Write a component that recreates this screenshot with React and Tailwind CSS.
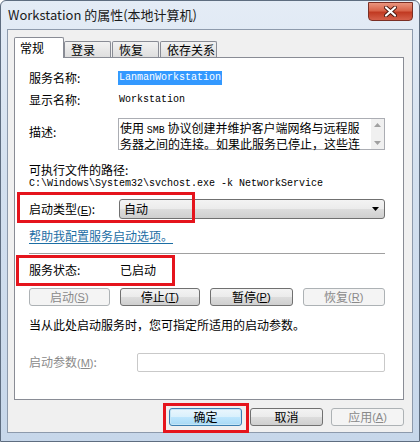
import React from "react";

const cjk = "font-['Noto_Sans_CJK_SC','Liberation_Sans',sans-serif]";
const mono = "font-['Liberation_Mono','Noto_Sans_CJK_SC',monospace]";

function Key({ k }) {
  return (
    <span className="font-['Liberation_Sans',sans-serif] text-[11px]">
      (<span className="underline">{k}</span>)
    </span>
  );
}

function Btn({ children, disabled, primary, className = "" }) {
  let look =
    "border-[#707070] bg-[linear-gradient(#f3f3f3_0%,#ebebeb_50%,#dddddd_50%,#cfcfcf_100%)] text-black";
  if (disabled) look = "border-[#adb2b5] bg-[#f4f4f4] text-[#8a8a8a]";
  if (primary)
    look =
      "border-[#3c7fb1] bg-[linear-gradient(#eaf6fd_0%,#d9f0fc_50%,#bee6fd_50%,#a7d9f5_100%)] text-black shadow-[inset_0_0_0_1px_#c4e5f6]";
  return (
    <div
      className={`flex h-[18px] items-center justify-center rounded-[3px] border text-[12px] leading-none ${look} ${className}`}
    >
      {children}
    </div>
  );
}

export default function App() {
  return (
    <div
      className={`relative h-[442px] w-[420px] overflow-hidden rounded-t-[6px] border border-[#5e6d80] bg-[linear-gradient(180deg,#e4ecf6_0%,#d3e0ef_40%,#c7d7ea_100%)] ${cjk}`}
    >
      {/* title bar */}
      <div className="flex h-[28px] items-center justify-between pl-[7px]">
        <span className="text-[13px] text-[#1b1b1b]">Workstation 的属性(本地计算机)</span>
        <div className="mr-[6px] -mt-[8px] flex h-[19px] w-[45px] items-center justify-center rounded-b-[4px] border border-[#7a2f25] bg-[linear-gradient(#e9957f_0%,#d8644a_45%,#c13a22_55%,#d5604a_100%)]">
          <svg width="13" height="11" viewBox="0 0 13 11">
            <path d="M2 1.5 L11 9.5 M11 1.5 L2 9.5" stroke="#4a1a12" strokeWidth="4" strokeLinecap="round" />
            <path d="M2 1.5 L11 9.5 M11 1.5 L2 9.5" stroke="#ffffff" strokeWidth="2.2" strokeLinecap="round" />
          </svg>
        </div>
      </div>

      {/* client area */}
      <div className="mx-[6px] h-[404px] border border-[#8d9aac] bg-[#f0f0f0] pl-[6px] pr-[8px] pt-[7px]">
        {/* tabs */}
        <div className="flex h-[20px] items-end text-[12px] leading-none">
          <div className="relative z-10 -mb-px flex h-[21px] w-[50px] items-start rounded-t-[2px] border border-b-0 border-[#898c95] bg-white pl-[5px] pt-[4px]">
            常规
          </div>
          <div className="flex h-[16px] w-[47px] items-center rounded-t-[2px] border border-b-0 border-[#898c95] bg-[linear-gradient(#f2f2f2,#dedede)] pl-[6px]">
            登录
          </div>
          <div className="ml-[1px] flex h-[16px] w-[47px] items-center rounded-t-[2px] border border-b-0 border-[#898c95] bg-[linear-gradient(#f2f2f2,#dedede)] pl-[6px]">
            恢复
          </div>
          <div className="ml-[1px] flex h-[16px] w-[57px] items-center rounded-t-[2px] border border-b-0 border-[#898c95] bg-[linear-gradient(#f2f2f2,#dedede)] pl-[6px]">
            依存关系
          </div>
        </div>

        {/* panel */}
        <div className="h-[343px] border border-[#898c95] bg-white pl-[14px] pr-[18px] text-[12px] leading-none text-black">
          <div className="mt-[12px] flex h-[16px] items-center">
            <span className="w-[89px]">服务名称:</span>
            <span className={`${mono} bg-[#3399ff] px-[1px] py-[2px] text-[10px] text-white`}>LanmanWorkstation</span>
          </div>
          <div className="mt-[6px] flex h-[16px] items-center">
            <span className="w-[90px]">显示名称:</span>
            <span className={`${mono} text-[10px]`}>Workstation</span>
          </div>
          <div className="mt-[10px] flex h-[32px]">
            <span className="w-[89px] pt-[8px]">描述:</span>
            <div className="flex flex-1 border border-[#abadb3]">
              <div className="flex-1 pl-[1px] pt-[2px] leading-[13px]">
                <div>
                  使用 <span className={`${mono} text-[10px]`}>SMB</span> 协议创建并维护客户端网络与远程服
                </div>
                <div>务器之间的连接。如果此服务已停止，这些连</div>
              </div>
              <div className="flex w-[13px] flex-col items-center justify-between bg-[#f0f0f0] py-[4px]">
                <svg width="7" height="4" viewBox="0 0 7 4"><path d="M0 4 L3.5 0 L7 4 Z" fill="#a0a0a0" /></svg>
                <svg width="7" height="4" viewBox="0 0 7 4"><path d="M0 0 L3.5 4 L7 0 Z" fill="#a0a0a0" /></svg>
              </div>
            </div>
          </div>
          <div className="mt-[13px] flex h-[14px] items-center">可执行文件的路径:</div>
          <div className={`${mono} flex h-[13px] items-center text-[10px]`}>
            C:\Windows\System32\svchost.exe -k NetworkService
          </div>
          <div className="mt-[9px] flex h-[20px] items-center">
            <span className="w-[90px]">
              启动类型<Key k="E" />:
            </span>
            <div className="flex h-[20px] flex-1 items-center justify-between rounded-[3px] border border-[#707070] bg-[linear-gradient(#f3f3f3_0%,#ebebeb_50%,#dddddd_50%,#cfcfcf_100%)] pl-[4px] pr-[5px]">
              <span>自动</span>
              <svg width="7" height="4" viewBox="0 0 7 4"><path d="M0 0 L7 0 L3.5 4 Z" fill="#000" /></svg>
            </div>
          </div>
          <div className="mt-[10px] flex h-[14px] items-center">
            <span className="text-[#1c6ea4] underline underline-offset-2">帮助我配置服务启动选项。</span>
          </div>
          <div className="mt-[10px] h-px bg-[#a0a0a0]" />
          <div className="mt-[8px] flex h-[16px] items-center">
            <span className="w-[91px]">服务状态:</span>
            <span>已启动</span>
          </div>
          <div className="mt-[10px] flex gap-[10px]">
            <Btn disabled className="w-[81px]">启动<Key k="S" /></Btn>
            <Btn className="w-[81px]">停止<Key k="T" /></Btn>
            <Btn className="w-[83px]">暂停<Key k="P" /></Btn>
            <Btn disabled className="w-[83px]">恢复<Key k="R" /></Btn>
          </div>
          <div className="mt-[12px] flex h-[14px] items-center">当从此处启动服务时，您可指定所适用的启动参数。</div>
          <div className="mt-[21px] flex h-[19px] items-center">
            <span className="w-[108px] text-[#8a8a8a]">
              启动参数<Key k="M" />:
            </span>
            <div className="h-[19px] flex-1 rounded-[2px] border border-[#c9c9c9] bg-white" />
          </div>
        </div>

        {/* dialog buttons */}
        <div className="mt-[8px] flex justify-end gap-[8px] pr-[0px]">
          <Btn primary className="w-[73px]">确定</Btn>
          <Btn className="w-[73px]">取消</Btn>
          <Btn disabled className="w-[73px]">应用<Key k="A" /></Btn>
        </div>
      </div>

      {/* red annotation boxes */}
      <div className="absolute left-[16px] top-[191px] h-[31px] w-[178px] border-[3px] border-[#e5141c]" />
      <div className="absolute left-[15px] top-[254px] h-[31px] w-[159px] border-[3px] border-[#e5141c]" />
      <div className="absolute left-[162px] top-[402px] h-[30px] w-[86px] border-[3px] border-[#e5141c]" />
    </div>
  );
}
